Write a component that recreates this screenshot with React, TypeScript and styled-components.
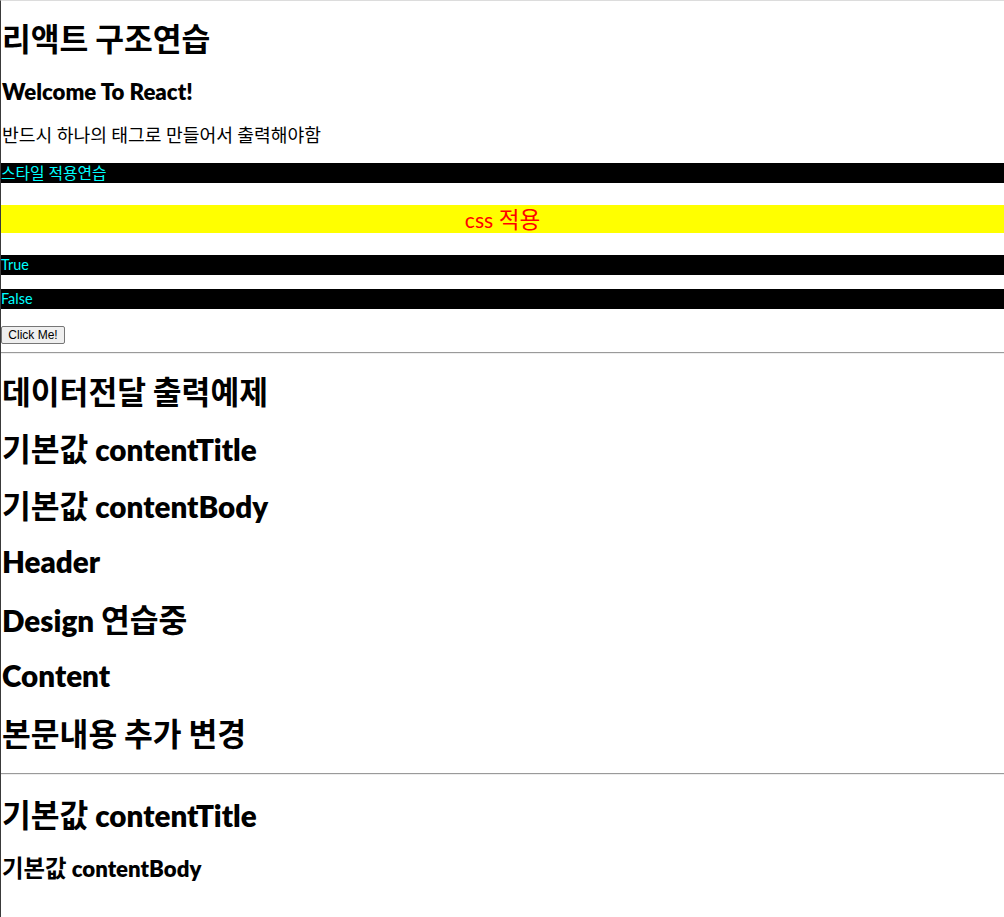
import React from "react";
import styled, { createGlobalStyle } from "styled-components";

const GlobalStyle = createGlobalStyle`
  html, body {
    margin: 0;
    padding: 0;
    background: #ffffff;
  }
  body {
    font-family: Lato, "Noto Sans CJK KR", sans-serif;
    color: #000000;
  }
`;

const Page = styled.div`
  min-height: 100vh;
  box-sizing: border-box;
  border-top: 1px solid #dcdcdc;
  border-left: 1px solid #3a3a3a;
  display: flex;
  flex-direction: column;
  align-items: stretch;
`;

/* Hangul runs get their own face and a slightly larger size to match the reference widths */
const Hangul = styled.span`
  font-family: "Noto Sans CJK KR", sans-serif;
  font-size: 1.065em;
`;

const KO_RUN = /([\u3131-\u318E\uAC00-\uD7A3]+)/;

function Txt({ children }: { children: string }) {
  const parts = children.split(KO_RUN).filter((s) => s.length > 0);
  return (
    <>
      {parts.map((part, i) =>
        KO_RUN.test(part) ? <Hangul key={i}>{part}</Hangul> : <React.Fragment key={i}>{part}</React.Fragment>
      )}
    </>
  );
}

const Heading = styled.h1<{ $mt: number }>`
  margin: ${(p) => p.$mt}px 0 0;
  padding-left: 1px;
  font-size: 29.6px;
  line-height: 38px;
  height: 38px;
  font-weight: 800;
  white-space: nowrap;
  & ${Hangul} {
    font-weight: 700;
    font-size: 1.058em;
  }
`;

const SubHeading = styled.h2<{ $mt: number }>`
  margin: ${(p) => p.$mt}px 0 0;
  padding-left: 1px;
  font-size: 22.2px;
  line-height: 28px;
  height: 28px;
  font-weight: 800;
  white-space: nowrap;
  & ${Hangul} {
    font-weight: 700;
    font-size: 1.055em;
  }
`;

const Paragraph = styled.p<{ $mt: number }>`
  margin: ${(p) => p.$mt}px 0 0;
  padding-left: 1px;
  font-size: 17.1px;
  line-height: 20px;
  height: 20px;
  white-space: nowrap;
`;

const DarkBar = styled.div<{ $mt: number }>`
  margin-top: ${(p) => p.$mt}px;
  height: 20px;
  line-height: 20px;
  background: #000000;
  color: #00ffff;
  font-size: 14.4px;
  white-space: nowrap;
  & ${Hangul} {
    font-size: 1.1em;
  }
`;

const Highlight = styled.div<{ $mt: number }>`
  margin-top: ${(p) => p.$mt}px;
  height: 28px;
  line-height: 28px;
  background: #ffff00;
  color: #ff0000;
  font-size: 21.2px;
  text-align: center;
`;

const ButtonRow = styled.div<{ $mt: number }>`
  margin-top: ${(p) => p.$mt}px;
  display: flex;
`;

const ClickButton = styled.button`
  width: 64px;
  height: 18px;
  padding: 0;
  box-sizing: border-box;
  font-family: "Liberation Sans", Arial, sans-serif;
  font-size: 12px;
  line-height: 14px;
  color: #000000;
  background: #efefef;
  border: 1px solid #767676;
  border-radius: 2px;
`;

const Divider = styled.hr<{ $mt: number }>`
  margin: ${(p) => p.$mt}px 0 0;
  border: none;
  border-top: 1px solid #9a9a9a;
  border-bottom: 1px solid #eeeeee;
  height: 0;
`;

export default function App() {
  const headings = [
    "데이터전달 출력예제",
    "기본값 contentTitle",
    "기본값 contentBody",
    "Header",
    "Design 연습중",
    "Content",
    "본문내용 추가 변경",
  ];
  return (
    <>
      <GlobalStyle />
      <Page>
        <Heading $mt={18}>
          <Txt>리액트 구조연습</Txt>
        </Heading>
        <SubHeading $mt={21}>Welcome To React!</SubHeading>
        <Paragraph $mt={18}>
          <Txt>반드시 하나의 태그로 만들어서 출력해야함</Txt>
        </Paragraph>
        <DarkBar $mt={19}>
          <Txt>스타일 적용연습</Txt>
        </DarkBar>
        <Highlight $mt={22}>
          <Txt>css 적용</Txt>
        </Highlight>
        <DarkBar $mt={22}>True</DarkBar>
        <DarkBar $mt={14}>False</DarkBar>
        <ButtonRow $mt={17}>
          <ClickButton>Click Me!</ClickButton>
        </ButtonRow>
        <Divider $mt={8} />
        {headings.map((h, i) => (
          <Heading key={h} $mt={i === 0 ? 18 : 19}>
            <Txt>{h}</Txt>
          </Heading>
        ))}
        <Divider $mt={21} />
        <Heading $mt={20}>
          <Txt>기본값 contentTitle</Txt>
        </Heading>
        <SubHeading $mt={20}>
          <Txt>기본값 contentBody</Txt>
        </SubHeading>
      </Page>
    </>
  );
}
